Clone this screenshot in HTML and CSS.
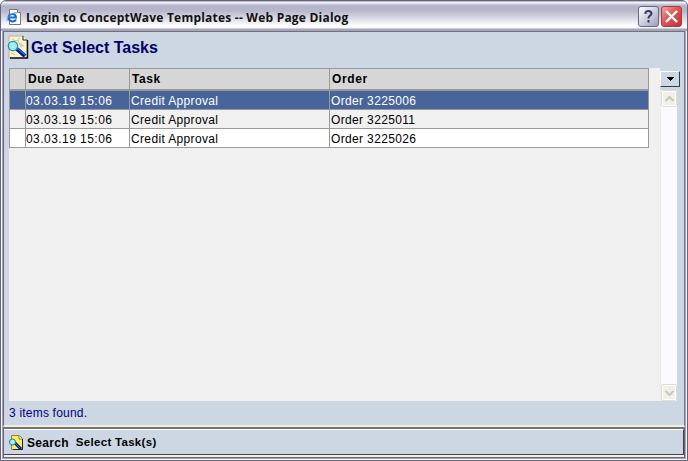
FILE: index.html
```html
<!DOCTYPE html>
<html lang="en">
<head>
<meta charset="utf-8">
<title>Login to ConceptWave Templates -- Web Page Dialog</title>
<link rel="stylesheet" href="styles.css">
</head>
<body>
<svg width="0" height="0" class="defs">
  <symbol id="search-doc" viewBox="0 0 22 24">
    <path d="M2 1h14l4 4v18H2z" fill="#f7f4d4" stroke="#b9b48c"/>
    <path d="M16 1v4h4" fill="#fff" stroke="#222"/>
    <path d="M20.500 5v18H3" fill="none" stroke="#111" stroke-width="1.500"/>
    <path d="M5 4l4 2 4-3M11 5l2 5 4 1M14 8v5M4 18l4 2M13 20h3" fill="none" stroke="#c3c5a0"/>
    <path d="M10 14l8 7" stroke="#001a80" stroke-width="4"/>
    <path d="M10 13l8 7" stroke="#1975ed" stroke-width="1.500"/>
    <circle cx="6" cy="11" r="4.700" fill="#85f2fa" stroke="#4b7f96" stroke-width="1.200"/>
    <path d="M4 10l2-2M5 13l3-3" stroke="#fff"/>
  </symbol>
</svg>
<div class="window">
  <header class="titlebar">
    <svg class="page-icon" viewBox="0 0 16 16">
      <path d="M3.500.500h8l3 3v12h-11z" fill="#fff" stroke="#77756f"/>
      <path d="M11.500.500v3h3" fill="#ddd" stroke="#77756f"/>
      <path d="M10 10.500C8 14 2.500 12.500 2.500 8.500S9.500 3.500 10 8.500H3" fill="none" stroke="#1769ce" stroke-width="2"/>
      <path d="M1 12C0 9 7 2 11 4" fill="none" stroke="#46a3ef"/>
    </svg>
    <span class="caption">Login to ConceptWave Templates -- Web Page Dialog</span>
    <span class="win-button help"><svg viewBox="0 0 21 21"><path d="M7.500 8V6.500Q8 5 10.500 5T13.500 7.500Q13.500 9 11.500 10Q10.500 10.700 10.500 12.500M10.500 14v2.500" fill="none" stroke="#383b5b" stroke-width="2"/></svg></span>
    <span class="win-button close"><svg viewBox="0 0 21 21"><path d="M5 5l11 11M16 5L5 16" stroke="#fff" stroke-width="2.400"/></svg></span>
  </header>
  <main class="content">
    <div class="heading"><svg class="heading-icon"><use href="#search-doc"/></svg><h1>Get Select Tasks</h1></div>
    <div class="list">
      <div class="panel">
        <div class="grid">
          <div class="row head"><span></span><span>Due Date</span><span>Task</span><span>Order</span></div>
          <div class="row selected"><span></span><span class="date">03.03.19 15:06</span><span>Credit Approval</span><span>Order 3225006</span></div>
          <div class="row"><span></span><span class="date">03.03.19 15:06</span><span>Credit Approval</span><span>Order 3225011</span></div>
          <div class="row white"><span></span><span class="date">03.03.19 15:06</span><span>Credit Approval</span><span>Order 3225026</span></div>
        </div>
      </div>
      <div class="side">
        <div class="menu-button"><svg viewBox="0 0 7 4"><path d="M0 0h7v1H6v1H5v1H4v1H3V3H2V2H1V1H0z"/></svg></div>
        <div class="scrollbar">
          <div class="arrow"><svg viewBox="0 0 9 6"><path d="M.500 5l4-4 4 4"/></svg></div>
          <div class="arrow"><svg viewBox="0 0 9 6"><path d="M.500 1l4 4 4-4"/></svg></div>
        </div>
      </div>
    </div>
    <div class="status">3 items found.</div>
  </main>
  <footer class="toolbar-frame">
    <div class="toolbar"><svg class="tool-icon" viewBox="0 0 14 15">
      <path d="M2.500.500h8l3 3v11h-11z" fill="#ffed55" stroke="#8b854b"/>
      <path d="M10 1v3h3" fill="#fff" stroke="#777"/>
      <path d="M13.500 4v10.500H4" fill="none" stroke="#222"/>
      <path d="M6 8l6 6" stroke="#001b89" stroke-width="3"/><path d="M6 8l5 5" stroke="#2383f1"/>
      <circle cx="3.500" cy="7" r="3" fill="#9cf5f8" stroke="#327087"/>
    </svg><span class="search">Search</span><span class="select">Select Task(s)</span></div>
  </footer>
</div>
</body>
</html>
```
FILE: styles.css
```css
* { box-sizing: border-box; }
body { margin: 0; background: #fff; font: 12px/18px "Liberation Sans", Arial, sans-serif; overflow: hidden; }
svg { display: block; flex: none; }
.defs { position: absolute; }
.window {
  width: 688px; height: 461px; display: flex; flex-direction: column;
  border: 1px solid #65637e; border-radius: 6px 6px 0 0; background: #a5a4bf;
  box-shadow: inset 0 0 0 1px #f7f7fc; padding: 0 2px 2px; overflow: hidden;
}
.titlebar {
  height: 30px; flex: none; margin: 0 -2px; padding: 1px 5px 0 5px; display: flex; align-items: center;
  background: linear-gradient(#77758f 0, #fff 1px, #d1d1df 3px, #b2b2c8 5px, #b8b8cc 10px, #e2e2eb 19px, #fff 25px, #f8f8fb 27px, #a5a4bf 28px);
}
.page-icon { width: 16px; height: 16px; }
.caption { flex: 1; margin: 2px 0 0 4px; font: bold 12px/16px "Open Sans", sans-serif; letter-spacing: .22px; color: #111; white-space: nowrap; }
.win-button { width: 21px; height: 21px; border: 1px solid #666781; border-radius: 3px; overflow: hidden; margin-left: 2px; }
.win-button svg { width: 21px; height: 21px; margin: -1px; }
.help { background: linear-gradient(135deg, #fff, #c5c6d9 60%, #9b9db9); }
.close { border-color: #a33b43; background: linear-gradient(135deg, #f1a3a0, #dc5857 45%, #bd3338); }
.content { height: 396px; flex: none; padding: 3px 3px 0 5px; background: #cdd7e3; border-top: 1px solid #75736f; border-left: 1px solid #66647c; border-right: 1px solid #77758f; border-bottom: 2px solid #eeeee4; }
.heading { height: 33px; display: flex; }
.heading-icon { width: 22px; height: 24px; margin: 0 0 0 -2px; }
h1 { margin: 3px 0 0 2px; font-size: 16px; line-height: 20px; color: #000066; white-space: nowrap; }
.list { display: flex; height: 333px; }
.panel { width: 651px; background: #f0f0f0; }
.grid { width: 640px; border-top: 1px solid #999; border-left: 1px solid #999; }
.row { height: 19px; display: grid; grid-template-columns: 16px 104px 200px 319px; grid-template-rows: 100%; border-bottom: 1px solid #999; line-height: 20px; letter-spacing: .35px; white-space: nowrap; }
.row span { border-right: 1px solid #999; padding-left: 1px; }
.row .date { padding-left: 0; letter-spacing: .45px; }
.row.head { height: 22px; border-bottom-width: 2px; background: #d6d6d6; font-weight: bold; line-height: 21px; letter-spacing: .6px; }
.row.head span { padding-left: 2px; }
.selected { background: #48659b; color: #fff; }
.white { background: #fff; }
.side { width: 20px; display: flex; flex-direction: column; }
.menu-button { width: 20px; height: 16px; margin: 3px 0; border: 1px solid; border-color: #fff #333f4c #333f4c #fff; background: #cdd7e3; display: grid; place-items: center; }
.menu-button svg { width: 7px; height: 4px; }
.scrollbar { width: 17px; flex: 1; background: #fbfbff; border-left: 1px solid #ecebe5; display: flex; flex-direction: column; justify-content: space-between; }
.arrow { width: 16px; height: 17px; border: 1px solid #dedfce; border-radius: 2px; background: #f0f0e9; box-shadow: inset 0 0 0 1px #fff; display: grid; place-items: center; }
.arrow svg { width: 9px; height: 6px; fill: none; stroke: #c7c6bc; stroke-width: 2; }
.status { margin-top: 3px; color: #000080; letter-spacing: .2px; }
.toolbar-frame { height: 31px; flex: none; background: #f4f0e5; border: 1px solid #66647c; border-top: 2px solid #77766f; }
.toolbar { height: 26px; display: flex; align-items: center; padding: 0 0 0 5px; background: #cdd7e3; border-top: 1px solid #fff; border-right: 1px solid #414149; border-bottom: 1px solid #414149; font-weight: bold; }
.tool-icon { width: 14px; height: 15px; }
.search { margin: 1px 0 0 4px; letter-spacing: .3px; }
.select { margin: 0 0 1px 7px; font-size: 11.5px; letter-spacing: .3px; }
```
